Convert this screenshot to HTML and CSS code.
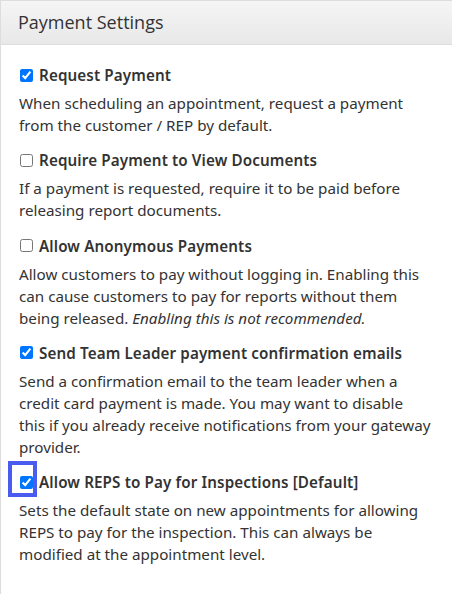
FILE: index.html
```html
<!DOCTYPE html>
<html>
<head>
<meta charset="utf-8">
<link rel="stylesheet" href="styles.css">
</head>
<body>
<div class="panel">
  <div class="panel-heading">Payment Settings</div>
  <div class="panel-body">
    <div class="setting">
      <label class="label"><input type="checkbox" checked> Request Payment</label>
      <p class="desc">When scheduling an appointment, request a payment from the customer / REP by default.</p>
    </div>
    <div class="setting">
      <label class="label"><input type="checkbox"> Require Payment to View Documents</label>
      <p class="desc">If a payment is requested, require it to be paid before releasing report documents.</p>
    </div>
    <div class="setting">
      <label class="label"><input type="checkbox"> Allow Anonymous Payments</label>
      <p class="desc">Allow customers to pay without logging in. Enabling this can cause customers to pay for reports without them being released. <em>Enabling this is not recommended.</em></p>
    </div>
    <div class="setting">
      <label class="label"><input type="checkbox" checked> Send Team Leader payment confirmation emails</label>
      <p class="desc">Send a confirmation email to the team leader when a credit card payment is made. You may want to disable<br>this if you already receive notifications from your gateway provider.</p>
    </div>
    <div class="setting">
      <label class="label focused"><span class="ring"></span><input type="checkbox" checked> Allow REPS to Pay for Inspections [Default]</label>
      <p class="desc">Sets the default state on new appointments for allowing REPS to pay for the inspection. This can always be modified at the appointment level.</p>
    </div>
  </div>
</div>
</body>
</html>
```
FILE: styles.css
```css
html, body {
  margin: 0;
  padding: 0;
  background: #fff;
}
body {
  font-family: "Noto Sans", "Open Sans", sans-serif;
  color: #333;
  font-size: 15.2px;
  line-height: 22px;
}
.panel {
  border: 1px solid #ddd;
  border-right: none;
  border-bottom: none;
  height: 594px;
  box-sizing: border-box;
}
.panel-heading {
  font-family: "Open Sans", sans-serif;
  font-size: 18px;
  height: 43px;
  line-height: 43px;
  padding-left: 17px;
  background: linear-gradient(#f5f5f5, #e8e8e8);
  border-bottom: 1px solid #ddd;
  color: #333;
}
.panel-body {
  padding: 19px 0 0 18px;
  width: 417px;
}
.setting {
  margin-bottom: 13.3px;
}
.label {
  display: flex;
  align-items: center;
  font-weight: 600;
  letter-spacing: 0.12px;
  position: relative;
}
.label input {
  width: 13px;
  height: 13px;
  margin: 0 6px 0 1px;
}
.desc {
  margin: 6px 0 0 0;
}
.ring {
  position: absolute;
  left: -11px;
  top: -10px;
  width: 21px;
  height: 28px;
  border: 4px solid #4a5cf0;
}
```
